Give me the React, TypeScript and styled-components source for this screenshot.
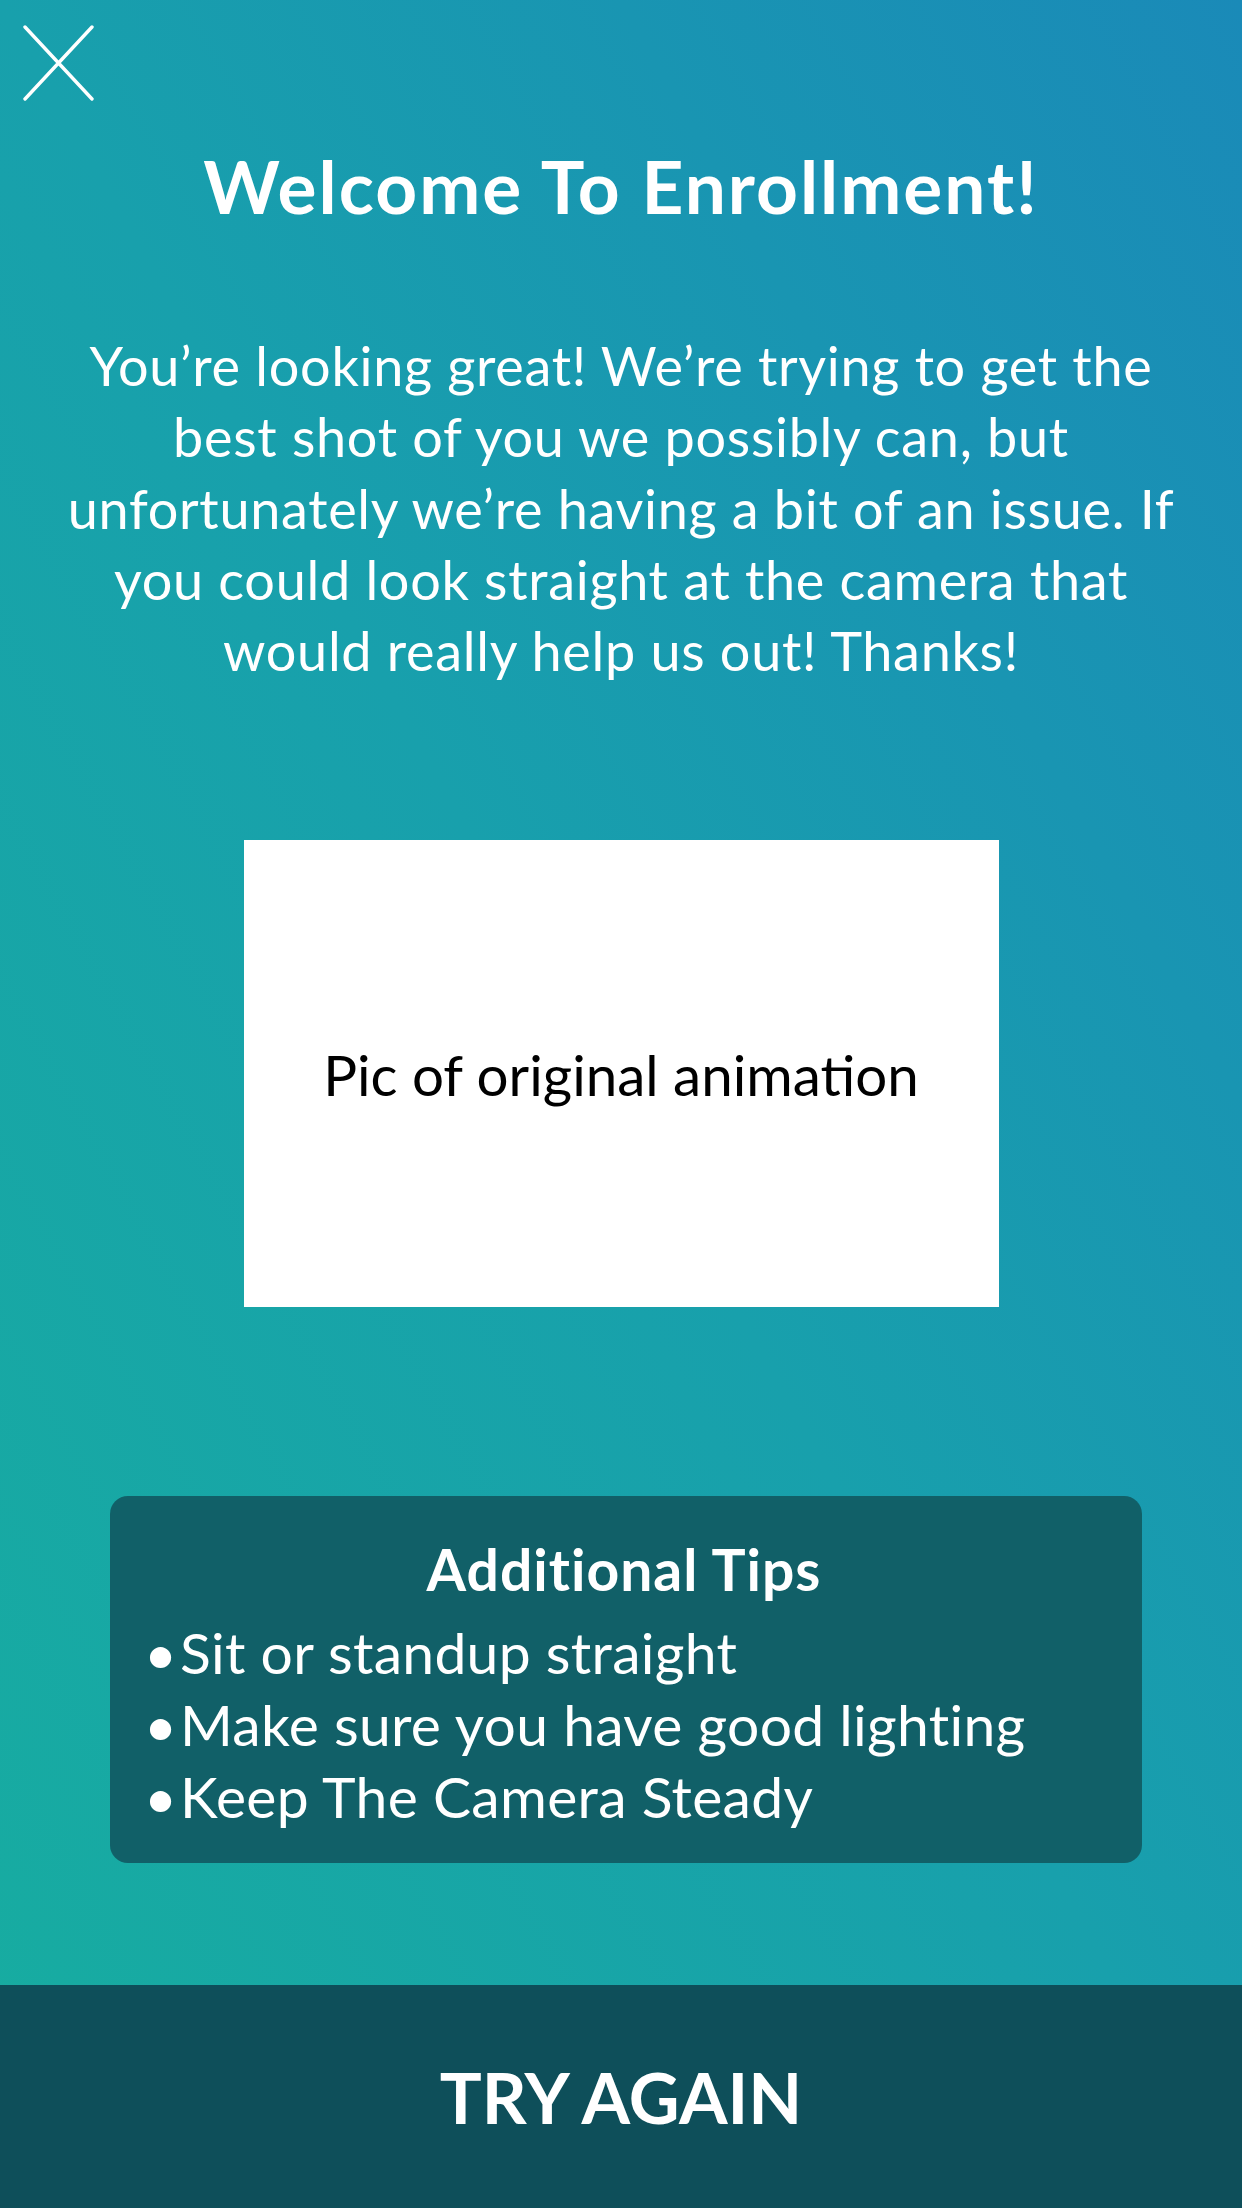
import React from "react";
import styled, { createGlobalStyle } from "styled-components";

const GlobalStyle = createGlobalStyle`
  html, body { margin: 0; padding: 0; }
  body { font-family: Lato, "Open Sans", sans-serif; }
`;

const Page = styled.div`
  display: flex;
  flex-direction: column;
  height: 2208px;
  background: linear-gradient(to top right, #17ada0 0%, #18a0ac 50%, #1a8ab8 100%);
  color: #fff;
  font-family: Lato, "Open Sans", sans-serif;
`;

const Header = styled.div`
  display: flex;
  padding: 25px 0 0 23px;
  height: 76px;
`;

const CloseButton = styled.button`
  background: none;
  border: none;
  padding: 0;
  width: 72px;
  height: 76px;
  cursor: pointer;
  display: block;
`;

const Title = styled.h1`
  margin: 49px 0 0;
  font-size: 73px;
  line-height: 72px;
  font-weight: 700;
  letter-spacing: 2px;
  text-align: center;
`;

const Message = styled.p`
  margin: 108px 0 0;
  font-size: 54px;
  line-height: 71.3px;
  font-weight: 400;
  letter-spacing: 0.7px;
  text-align: center;
`;

const Preview = styled.div`
  margin: 154px auto 0;
  width: 755px;
  height: 467px;
  background: #fff;
  color: #000;
  display: flex;
  align-items: center;
  justify-content: center;
  font-size: 56.5px;
`;

const TipsCard = styled.div`
  margin: 189px 0 0 110px;
  width: 1032px;
  box-sizing: border-box;
  height: 367px;
  padding: 37px 38px 0 34px;
  border-radius: 18px;
  background: #116068;
`;

const TipsTitle = styled.h2`
  margin: 0 0 11px;
  font-size: 57px;
  line-height: 72px;
  font-weight: 700;
  letter-spacing: 1px;
  text-align: center;
`;

const TipsList = styled.ul`
  list-style: none;
  margin: 0;
  padding: 0;
`;

const Tip = styled.li`
  display: flex;
  font-size: 57px;
  line-height: 72px;
  letter-spacing: 0.3px;
`;

const Bullet = styled.span`
  width: 36px;
  flex: none;
`;

const Spacer = styled.div`
  flex: 1;
`;

const ActionBar = styled.button`
  height: 223px;
  width: 100%;
  border: none;
  background: #0e4f5a;
  color: #fff;
  font-family: Lato, "Open Sans", sans-serif;
  font-size: 70px;
  font-weight: 700;
  cursor: pointer;
  display: flex;
  align-items: center;
  justify-content: center;
`;

const tips = [
  "Sit or standup straight",
  "Make sure you have good lighting",
  "Keep The Camera Steady",
];

export default function App() {
  return (
    <>
      <GlobalStyle />
      <Page>
        <Header>
          <CloseButton aria-label="Close">
            <svg width="72" height="76" viewBox="0 0 72 76">
              <path
                d="M2 2 L69 74 M69 2 L2 74"
                stroke="#fff"
                strokeWidth="3.4"
                strokeLinecap="round"
                fill="none"
              />
            </svg>
          </CloseButton>
        </Header>
        <Title>Welcome To Enrollment!</Title>
        <Message>
          You’re looking great! We’re trying to get the
          <br />
          best shot of you we possibly can, but
          <br />
          unfortunately we’re having a bit of an issue. If
          <br />
          you could look straight at the camera that
          <br />
          would really help us out! Thanks!
        </Message>
        <Preview>Pic of original animation</Preview>
        <TipsCard>
          <TipsTitle>Additional Tips</TipsTitle>
          <TipsList>
            {tips.map((t) => (
              <Tip key={t}>
                <Bullet>•</Bullet>
                {t}
              </Tip>
            ))}
          </TipsList>
        </TipsCard>
        <Spacer />
        <ActionBar>TRY AGAIN</ActionBar>
      </Page>
    </>
  );
}
